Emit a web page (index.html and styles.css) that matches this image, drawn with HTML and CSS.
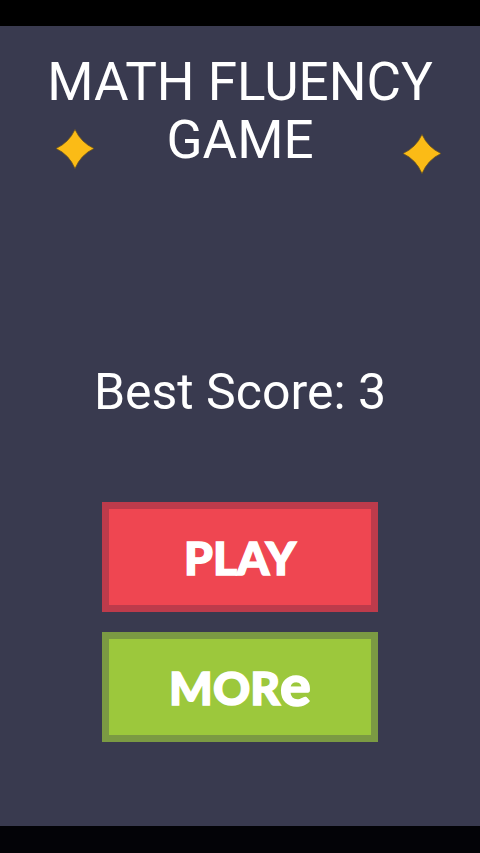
FILE: index.html
```html
<!DOCTYPE html>
<html>
<head>
<meta charset="utf-8">
<link rel="stylesheet" href="styles.css">
</head>
<body>
<div class="screen">
  <div class="bar"></div>
  <main class="main">
    <svg class="star star-left" viewBox="0 0 40 40" width="40" height="41"><path d="M20 1 Q26 14 39 20 Q26 26 20 40 Q14 26 1 20 Q14 14 20 1Z"/></svg>
    <svg class="star star-right" viewBox="0 0 40 40" width="40" height="41"><path d="M20 1 Q26 14 39 20 Q26 26 20 40 Q14 26 1 20 Q14 14 20 1Z"/></svg>
    <h1 class="title">MATH FLUENCY<br>GAME</h1>
    <div class="score">Best Score: 3</div>
    <button class="btn btn-play">PLAY</button>
    <button class="btn btn-more">MOR<span class="big-e">e</span></button>
  </main>
  <div class="bar bar-bottom"></div>
</div>
</body>
</html>
```
FILE: styles.css
```css
html, body {
  margin: 0;
  padding: 0;
  background: #000;
}
.screen {
  width: 480px;
  height: 853px;
  display: flex;
  flex-direction: column;
  font-family: Roboto, "Liberation Sans", sans-serif;
}
.bar {
  height: 26px;
  background: #000;
  flex: none;
}
.bar-bottom {
  height: 27px;
  background: #030307;
}
.main {
  position: relative;
  height: 800px;
  background: #393a4f;
  display: flex;
  flex-direction: column;
  align-items: center;
}
.title {
  margin: 27px 0 0;
  font-size: 53px;
  line-height: 58px;
  font-weight: 400;
  color: #fff;
  text-align: center;
}
.score {
  margin-top: 194px;
  font-size: 50px;
  color: #fff;
}
.btn {
  width: 276px;
  height: 110px;
  box-sizing: border-box;
  border: 7px solid;
  padding: 0;
  font-family: Lato, "Open Sans", sans-serif;
  font-weight: 900;
  font-size: 46px;
  color: #fff;
  -webkit-text-stroke: 1.5px #fff;
  display: flex;
  align-items: center;
  justify-content: center;
}
.btn-play {
  margin-top: 81px;
  background: #ef4651;
  border-color: #bd3b4b;
}
.btn-more {
  margin-top: 20px;
  background: #9cc83c;
  border-color: #7b9a43;
}
.big-e {
  font-size: 1.25em;
  line-height: 1;
  margin-top: -6px;
}
.star {
  position: absolute;
  fill: #fbbb16;
  stroke: #6b5420;
  stroke-width: 0.8;
}
.star-left {
  left: 55px;
  top: 102px;
}
.star-right {
  left: 402px;
  top: 107px;
}
```
